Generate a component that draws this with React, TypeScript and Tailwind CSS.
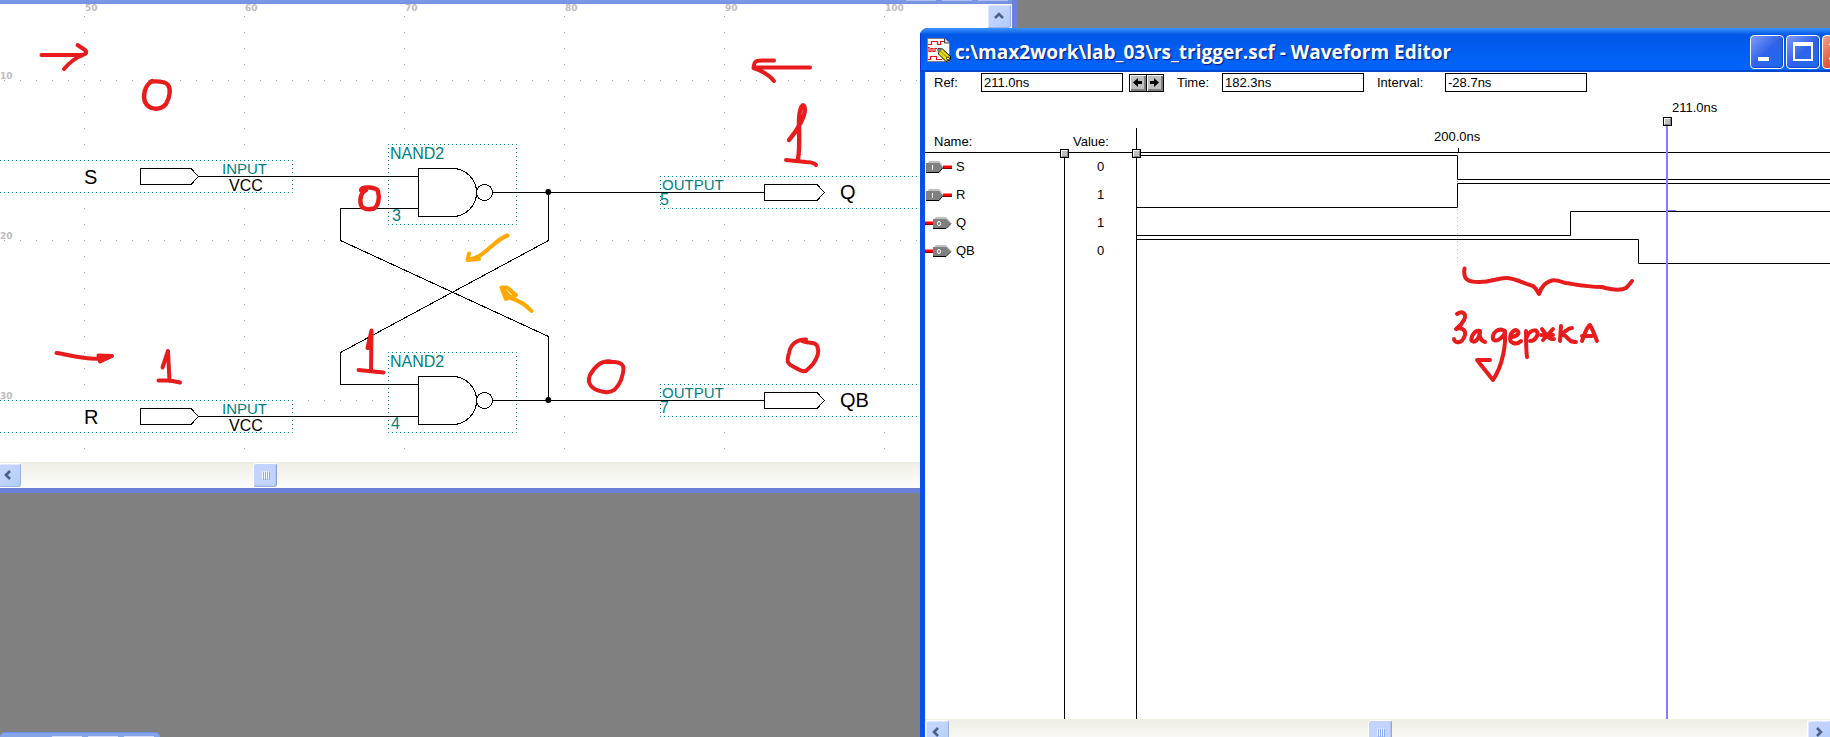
import React from "react";

const teal = "#008080";

function Chevron({ d }: { d: string }) {
  return (
    <svg width="12" height="12" viewBox="0 0 12 12" fill="none" stroke="#4d6185" strokeWidth="2.6" aria-hidden="true">
      <path d={d} />
    </svg>
  );
}

function ScrollButton({ label, d }: { label: string; d: string }) {
  return (
    <button
      type="button"
      aria-label={label}
      className="flex size-6 shrink-0 items-center justify-center rounded-[3px] border border-white border-r-[#9ab3e8] border-b-[#9ab3e8] bg-linear-to-br from-[#c5d5fd] via-[#c0d2fd] to-[#b0ccfa] shadow-[inset_1px_1px_0_#dfe8ff]"
    >
      <Chevron d={d} />
    </button>
  );
}

function Thumb() {
  return (
    <div className="flex size-6 shrink-0 items-center justify-center gap-px rounded-[3px] border border-white border-r-[#8ea6df] border-b-[#9ab3e8] bg-[#c3d3fd] shadow-[inset_-1px_-1px_0_#b0c4f5]">
      {[0, 1, 2, 3].map((i) => (
        <span key={i} className="h-2 w-px bg-[#eef4fe] shadow-[1px_1px_0_#8cb0f8]" />
      ))}
    </div>
  );
}

const LEFT = "M7 2 L3 6 L7 10";
const RIGHT = "M4 2 L8 6 L4 10";
const UP = "M2 8 L6 4 L10 8";

function SymbolFrame({ x, y, width, height }: { x: number; y: number; width: number; height: number }) {
  return (
    <rect
      x={x + 0.5}
      y={y + 0.5}
      width={width}
      height={height}
      fill="#fff"
      stroke={teal}
      strokeDasharray="1 3"
      strokeDashoffset="0.5"
    />
  );
}

function Nand({ y, pin, pinX }: { y: number; pin: string; pinX: number }) {
  return (
    <g>
      <SymbolFrame x={388} y={y - 48} width={128} height={80} />
      <path
        d={`M418.5 ${y - 23.5} H452.5 A24 24 0 0 1 452.5 ${y + 24.5} H418.5 Z`}
        fill="none"
        stroke="#000"
        shapeRendering="crispEdges"
      />
      <circle cx="484.5" cy={y + 0.5} r="8" fill="none" stroke="#000" shapeRendering="crispEdges" />
      <text x="390" y={y - 33} fontSize="16" fill={teal}>NAND2</text>
      <text x={pinX} y={y + 29} fontSize="16" fill={teal}>{pin}</text>
    </g>
  );
}

function InputPin({ y, name }: { y: number; name: string }) {
  return (
    <g>
      <SymbolFrame x={-20} y={y - 16} width={312} height={32} />
      <path
        d={`M140.5 ${y - 7.5} H191 L198.5 ${y + 0.5} L191 ${y + 8.5} H140.5 Z`}
        fill="none"
        stroke="#000"
        shapeRendering="crispEdges"
      />
      <text x="222" y={y - 2} fontSize="15" fill={teal}>INPUT</text>
      <text x="229" y={y + 15} fontSize="16">VCC</text>
      <text x="84" y={y + 8} fontSize="20">{name}</text>
    </g>
  );
}

function OutputPin({ y, name, pin }: { y: number; name: string; pin: string }) {
  return (
    <g>
      <SymbolFrame x={660} y={y - 16} width={352} height={32} />
      <path
        d={`M764.5 ${y - 7.5} H817 L824.5 ${y + 0.5} L817 ${y + 8.5} H764.5 Z`}
        fill="none"
        stroke="#000"
        shapeRendering="crispEdges"
      />
      <text x="662" y={y - 2} fontSize="15" fill={teal}>OUTPUT</text>
      <text x="660" y={y + 13} fontSize="16" fill={teal}>{pin}</text>
      <text x="840" y={y + 7} fontSize="20">{name}</text>
    </g>
  );
}

function Schematic() {
  return (
    <svg
      width="990"
      height="458"
      viewBox="-3 4 990 458"
      className="block shrink-0 overflow-visible bg-white font-['Liberation_Sans',Arial,sans-serif]"
    >
      <g stroke="#b4b4b4" strokeDasharray="1 15">
        {[84, 244, 404, 564, 724, 884].map((x) => (
          <path key={x} d={`M${x + 0.5} 16 V450`} />
        ))}
        {[80, 240, 400].map((y) => (
          <path key={y} d={`M4 ${y + 0.5} H986`} />
        ))}
      </g>
      <g fill="#bcbcbc" fontSize="9" fontWeight="700" className="font-['DejaVu_Sans',sans-serif]">
        {[50, 60, 70, 80, 90, 100].map((n) => (
          <text key={n} x={85 + (n - 50) * 16} y="11">{n}</text>
        ))}
        {[10, 20, 30].map((n) => (
          <text key={n} x="0" y={n * 16 - 81}>{n}</text>
        ))}
      </g>

      <InputPin y={176} name="S" />
      <InputPin y={416} name="R" />
      <OutputPin y={192} name="Q" pin="5" />
      <OutputPin y={400} name="QB" pin="7" />
      <Nand y={192} pin="3" pinX={392} />
      <Nand y={400} pin="4" pinX={391} />

      <g fill="none" stroke="#000" shapeRendering="crispEdges">
        <path d="M198 176.5 H418" />
        <path d="M198 416.5 H418" />
        <path d="M493 192.5 H764" />
        <path d="M493 400.5 H764" />
        <path d="M418 208.5 H340.5 V240.5 L548.5 336.5 V400" />
        <path d="M418 384.5 H340.5 V352.5 L548.5 240.5 V192" />
      </g>
      <circle cx="548.3" cy="192" r="2.9" />
      <circle cx="548.3" cy="400" r="2.9" />

      <g fill="none" stroke="#e81c1c" strokeWidth="4" strokeLinecap="round" strokeLinejoin="round">
        <path d="M41.5 55 H80 C87 55 87 52 85 50 L77.5 45 M83 55 C75 58 69 63 64 69" />
        <path d="M152 81 C144 86 143 96 145 102 C149 110 160 111 166 104 C170 97 171 89 168 85 C165 81 158 81 151 81.5" strokeWidth="4.4" />
        <path d="M810 67.5 H756 M774 60.5 H762 C754 60.5 754 63 753.5 68 C763 71 770 76 774 81" />
        <path d="M789 140 C798 130 807 113 804.5 107 C802 101 799 112 799 120 C799 135 800 150 798 159" strokeWidth="4.4" />
        <path d="M786 160 L806 162 C812 162 814 163 816 165" />
        <path d="M361 190 C362 186 376 187 378 191 C380 199 378 206 374 208.5 C368 210 362 209 361 205 C359 198 362 191 366 190" strokeWidth="4.4" />
        <path d="M56.5 353 C70 355 85 360 100 358.5" />
        <path d="M98.5 355.5 L112 356 L100 361.5 Z" fill="#e81c1c" />
        <path d="M162.5 367.5 L168 351 L169.5 381 M158.5 380.5 H170 L180 382.5" />
        <path d="M367.5 348 L371.5 330.5 L371 371 M368 348 L370.5 337" />
        <path d="M358.5 370 L383.5 372.5" />
        <path d="M611 361.5 C601 360 595 366 590 375 C586 384 593 390 602 391.5 C612 394 617 389 621 380 C625 368 625 363 615 362 L606 362" />
        <path d="M806 339.5 C797 339 790 345 789 353 C786 363 788 364 795 367.5 C801 371 805 373 808 369 C816 363 819 353 818 349 C817 343 814 343 808 342.5 L802 341" />
      </g>
      <g fill="none" stroke="#ffa800" strokeWidth="4" strokeLinecap="round" strokeLinejoin="round">
        <path d="M507.5 235.5 C497 239 488 251 479 256 L469 260 M469 253.5 L467.5 260 L479 259" />
        <path d="M531.5 311 C526 305 520 301 511 298 L501.5 287.5 L507 287.5 L516 295 L506 299 L502 289" />
      </g>
    </svg>
  );
}

function SchematicWindow() {
  return (
    <section
      aria-label="Graphic Editor"
      className="absolute -left-[3px] top-0 flex flex-col border-r-[5px] border-b-[5px] border-r-[#6f7fdc] border-b-[#6c7fd8]"
    >
      <div className="flex h-1 justify-end gap-1.5 bg-linear-to-b from-[#7a9be8] to-[#7590dc] pr-1">
        <span className="h-px w-[30px] bg-[#b0c0f0]" />
        <span className="h-px w-[30px] bg-[#b0c0f0]" />
        <span className="h-px w-[30px] bg-[#b0c0f0]" />
      </div>
      <div className="flex">
        <Schematic />
        <div className="flex w-[25px] flex-col items-start bg-linear-to-r from-[#f0f0ec] to-[#fdfdfa]">
          <ScrollButton label="Scroll up" d={UP} />
        </div>
      </div>
      <div className="flex h-[26px] items-center bg-linear-to-b from-[#eeede5] to-[#fefefb]">
        <ScrollButton label="Scroll left" d={LEFT} />
        <div className="ml-[232px]">
          <Thumb />
        </div>
      </div>
    </section>
  );
}

function WaveformIcon() {
  return (
    <svg width="24" height="24" viewBox="0 0 24 24" aria-hidden="true" className="shrink-0">
      <path d="M0.5 0.5 H17.5 L22.5 5 V23.5 H0.5 Z" fill="#fff" stroke="#808080" />
      <path d="M17.5 0.5 V5 H22.5" fill="#d8d8d8" stroke="#404040" />
      <path
        d="M1 6.5 H4.5 V3.5 H10.5 V6.5 H13.5 V3.5 H17 M1 9.5 H2 V13.5 H4 V10.5 H6 V13.5 H8 V10.5 H10 M1 21.5 H3.5 V18.5 H9.5 V21.5 H15"
        fill="none"
        stroke="#f01010"
        strokeWidth="1.2"
      />
      <path d="M11 10.5 L15.5 11 L23.5 18.5 L23 22 L19 23.5 L11.5 16 Z" fill="#e8dc10" stroke="#000" />
      <path d="M11 10.5 L15.5 11 L11.5 16 Z" fill="#808080" />
      <path d="M14 13.5 L21 20.5" stroke="#807800" strokeWidth="1" />
      <circle cx="21" cy="20.5" r="1.5" fill="#fff26a" stroke="#000" strokeWidth="0.7" />
    </svg>
  );
}

function CaptionButton({ label, tone, children }: { label: string; tone: string; children: React.ReactNode }) {
  return (
    <button
      type="button"
      aria-label={label}
      className={`size-[34px] shrink-0 rounded-[4px] border border-white ${tone}`}
    >
      <svg width="32" height="32" viewBox="0 0 32 32" fill="none" stroke="#fff" aria-hidden="true">
        {children}
      </svg>
    </button>
  );
}

const blueTone =
  "bg-linear-to-br from-[#7d9bf5] via-[#2f62ea] to-[#1a6af2] shadow-[inset_-1px_-1px_1px_#1846c0]";
const redTone = "bg-linear-to-br from-[#f0a08c] via-[#e25a38] to-[#c83c18]";

function StepButton({ label, d }: { label: string; d: string }) {
  return (
    <button
      type="button"
      aria-label={label}
      className="-mr-px size-[18px] shrink-0 border border-black bg-[#c0c0c0] shadow-[inset_1px_1px_0_#fff,inset_-2px_-2px_0_#808080]"
    >
      <svg width="16" height="16" viewBox="0 0 16 16" aria-hidden="true">
        <path d={d} />
      </svg>
    </button>
  );
}

function Field({ id, value }: { id: string; value: string }) {
  return (
    <input
      id={id}
      readOnly
      defaultValue={value}
      className="h-[19px] w-[142px] shrink-0 border border-black bg-white px-0.5 text-[13px] leading-4 outline-none"
    />
  );
}

function PinIcon({ output }: { output: boolean }) {
  return (
    <svg width="28" height="14" viewBox="0 0 28 14" aria-hidden="true">
      {output ? (
        <>
          <path d="M0 7 H8" stroke="#f00" strokeWidth="3" />
          <path d="M0 8.5 H8" stroke="#800" strokeWidth="1" />
          <path d="M8 4 L11 1 H21 L26 6.5 L22 4 Z" fill="#c0c0c0" />
          <path d="M8 3 H21 L26 7 L21 12 H8 Z" fill="#808080" />
          <path d="M8 12.5 H21 L26 7.5" fill="none" stroke="#000" />
          <ellipse cx="14" cy="7.5" rx="1.6" ry="2" fill="none" stroke="#fff" />
        </>
      ) : (
        <>
          <path d="M18 7 H27" stroke="#f00" strokeWidth="3" />
          <path d="M18 8.5 H27" stroke="#800" strokeWidth="1" />
          <path d="M2 4 L4 1 H14 L18 5 L14 4 Z" fill="#c0c0c0" />
          <path d="M1 3 H14 L18 7 L14 12 H1 Z" fill="#808080" />
          <path d="M1 12.5 H14 L18 7.5" fill="none" stroke="#000" />
          <path d="M7.5 5 V10" stroke="#fff" />
        </>
      )}
    </svg>
  );
}

const signals = [
  { name: "S", value: "0", output: false, trace: "M0 62.5 H321.5 V86.5 H3000" },
  { name: "R", value: "1", output: false, trace: "M0 114.5 H321.5 V90.5 H3000" },
  { name: "Q", value: "1", output: true, trace: "M0 142.5 H434.5 V118.5 H3000" },
  { name: "QB", value: "0", output: true, trace: "M0 146.5 H502.5 V170.5 H3000" },
];

function Handle({ x, y }: { x: number; y: number }) {
  return (
    <g>
      <rect x={x + 0.5} y={y + 0.5} width="8" height="8" fill="#c0c0c0" stroke="#000" />
      <path d={`M${x + 1.5} ${y + 7} V${y + 1.5} H${x + 7}`} fill="none" stroke="#fff" />
      <path d={`M${x + 2} ${y + 7.5} H${x + 7.5} V${y + 2}`} fill="none" stroke="#808080" />
    </g>
  );
}

function Traces() {
  return (
    <svg className="h-full min-w-0 flex-1 overflow-visible font-['Liberation_Sans',Arial,sans-serif]" fontSize="13">
      <path d="M321.5 60 V170" stroke="#b8b8b8" strokeDasharray="1 3" />
      <path d="M0 59.5 H3000 M322.5 55 V59" stroke="#000" />
      <path d="M0.5 35 V3000" stroke="#000" />
      <g fill="none" stroke="#000">
        {signals.map((s) => (
          <path key={s.name} d={s.trace} />
        ))}
      </g>
      <path d="M531 32 V3000" stroke="#8080ff" strokeWidth="2" />
      <path d="M532 117.5 H540" stroke="#8080ff" />
      <Handle x={-76} y={56} />
      <Handle x={-4} y={56} />
      <Handle x={527} y={24} />
      <text x="298" y="48">200.0ns</text>
      <text x="536" y="19">211.0ns</text>
      <g fill="none" stroke="#e81c1c" strokeWidth="4" strokeLinecap="round" strokeLinejoin="round">
        <path d="M328.5 175.5 C327 186 331 189 343 189 C356 189 361 185 370 185 C380 185 388 191 397 193 C400 195 401 198 403 201 C404 198 405 195 408 192 C417 184 422 188 430 190 C442 192 451 194 466 194 C473 196 484 198 490 195 C492 193 494 191 496 188" />
        <path d="M321 221 C327 217 331 221 328 227 C326 231 324 233 320 236 C326 234 330 237 329 242 C326 252 318 250 318 246" />
        <path d="M344 238 C338 236 334 246 336 248 C340 251 344 243 344 238 C343 245 345 248 349 249" />
        <path d="M369 238 C362 234 356 240 357 246 C360 251 369 243 369 238 C370 251 367 272 357 287 L341 267 L354 267" />
        <path d="M376 244 C382 243 385 239 380 237 C374 238 372 248 377 250 C380 251 383 250 385 248" />
        <path d="M390 238 C390 245 390 257 391 264 M390 246 C394 234 404 236 401 243 C399 247 396 248 394 248" />
        <path d="M406 236 C409 240 413 248 418 246 M417 236 L407 247 M405 242 H417" />
        <path d="M425 233 L424 248 M436 235 C432 235 427 240 426 242 C432 241 431 250 440 249" />
        <path d="M446 248 C448 242 452 232 454 232 C457 237 459 243 461 248 M446 243 H456" />
      </g>
    </svg>
  );
}

function WaveformWindow() {
  return (
    <section
      aria-label="Waveform Editor"
      className="absolute -right-[30px] -bottom-[7px] left-[920px] top-7 flex flex-col overflow-hidden rounded-t-[8px] bg-[#0a55e8]"
    >
      <header className="flex h-11 shrink-0 items-center bg-linear-to-b from-[#3c94ff] via-[#0058e6] via-15% to-[#0066ff] pl-[7px] pr-1 shadow-[inset_1px_0_0_#0831d9,inset_0_-2px_0_#0048d0]">
        <WaveformIcon />
        <h1 className="ml-1 flex-1 whitespace-nowrap pt-1 font-['Open_Sans','Noto_Sans',sans-serif] text-[19px] font-bold leading-6 text-white [text-shadow:1px_1px_1px_#0a1883]">
          c:\max2work\lab_03\rs_trigger.scf - Waveform Editor
        </h1>
        <div className="flex shrink-0 gap-0.5 pt-1">
          <CaptionButton label="Minimize" tone={blueTone}>
            <path d="M7 23 H18" strokeWidth="4" />
          </CaptionButton>
          <CaptionButton label="Maximize" tone={blueTone}>
            <path d="M7 8 H25 V24 H7 Z" strokeWidth="2" />
            <path d="M6 8 H26" strokeWidth="4" />
          </CaptionButton>
          <CaptionButton label="Close" tone={redTone}>
            <path d="M7 7 L24 24 M24 7 L7 24" strokeWidth="4" />
          </CaptionButton>
        </div>
      </header>

      <div className="flex min-h-0 flex-1 flex-col border-l-[5px] border-[#0a4fe6] bg-white">
        <div className="flex h-[21px] shrink-0 items-center pl-[9px] text-[13px] leading-4">
          <label htmlFor="ref" className="w-[47px] shrink-0">Ref:</label>
          <Field id="ref" value="211.0ns" />
          <div className="ml-1.5 flex w-12 shrink-0">
            <StepButton label="Previous transition" d="M3 7.5 L8 3 V6 H12 V9 H8 V12 Z" />
            <StepButton label="Next transition" d="M12 7.5 L7 3 V6 H3 V9 H7 V12 Z" />
          </div>
          <label htmlFor="time" className="w-[45px] shrink-0">Time:</label>
          <Field id="time" value="182.3ns" />
          <label htmlFor="interval" className="ml-[13px] w-[68px] shrink-0">Interval:</label>
          <Field id="interval" value="-28.7ns" />
        </div>

        <div className="flex min-h-0 flex-1 overflow-hidden">
          <table className="h-full w-[211px] shrink-0 table-fixed border-separate border-spacing-0 text-[13px] leading-4">
            <thead>
              <tr className="h-[60px]">
                <th className="w-[140px] border-b border-black pb-0.5 pl-[9px] text-left align-bottom font-normal">Name:</th>
                <th className="border-b border-black pb-0.5 pl-2 text-left align-bottom font-normal">Value:</th>
              </tr>
            </thead>
            <tbody>
              {signals.map((s) => (
                <tr key={s.name} className="h-7">
                  <td className="border-r border-black p-0">
                    <div className="flex items-center gap-[3px]">
                      <PinIcon output={s.output} />
                      <span>{s.name}</span>
                    </div>
                  </td>
                  <td className="p-0 text-center">{s.value}</td>
                </tr>
              ))}
              <tr>
                <td className="border-r border-black p-0" />
                <td className="p-0" />
              </tr>
            </tbody>
          </table>
          <Traces />
        </div>

        <div className="flex h-[25px] shrink-0 items-center border-t border-[#f0efe6] bg-linear-to-b from-[#eeede5] to-[#fefefb] pr-[29px]">
          <ScrollButton label="Scroll left" d={LEFT} />
          <div className="flex flex-1 justify-center pl-1">
            <Thumb />
          </div>
          <ScrollButton label="Scroll right" d={RIGHT} />
        </div>
      </div>
    </section>
  );
}

export default function App() {
  return (
    <main className="relative h-screen w-full overflow-hidden bg-[#808080] text-black font-['Liberation_Sans',Arial,sans-serif]">
      <SchematicWindow />
      <div className="absolute bottom-0 left-0 flex h-[5px] w-40 justify-end gap-1.5 rounded-t-[5px] border-t border-[#6a90e8] bg-[#86a4e8] pr-1.5">
        <span className="mt-[3px] h-px w-[30px] bg-[#d4dcf8]" />
        <span className="mt-[3px] h-px w-[30px] bg-[#d4dcf8]" />
        <span className="mt-[3px] h-px w-[30px] bg-[#d4dcf8]" />
      </div>
      <WaveformWindow />
    </main>
  );
}
